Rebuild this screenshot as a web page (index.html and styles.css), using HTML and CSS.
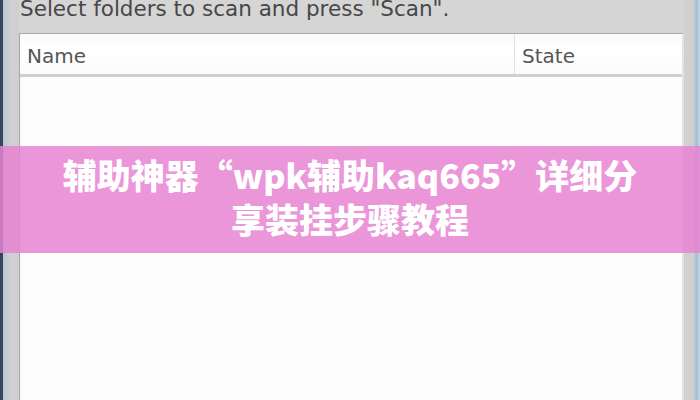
FILE: index.html
```html
<!DOCTYPE html>
<html>
<head>
<meta charset="utf-8">
<link rel="stylesheet" href="styles.css">
</head>
<body>
<div class="window">
  <div class="edge-left"></div>
  <div class="dialog">
    <div class="prompt">Select folders to scan and press "Scan".</div>
    <div class="list">
      <div class="list-header">
        <div class="col col-name">Name</div>
        <div class="col col-state">State</div>
      </div>
      <div class="list-body"></div>
    </div>
  </div>
  <div class="edge-right"></div>
</div>
<div class="banner">
  <div class="banner-text">
    <div class="banner-line">辅助神器“wpk辅助kaq665”详细分</div>
    <div class="banner-line">享装挂步骤教程</div>
  </div>
</div>
</body>
</html>
```
FILE: styles.css
```css
html, body {
  margin: 0;
  padding: 0;
  width: 700px;
  height: 400px;
  overflow: hidden;
  background: #d5d5d5;
}
.window {
  display: flex;
  width: 700px;
  height: 400px;
}
.edge-left {
  width: 19px;
  flex: none;
  background: linear-gradient(to right, #34465c 0, #34465c 3px, #b9c5d1 3px, #c6ccd3 7px, #d1d1d1 12px, #cfcfcf 19px);
}
.edge-right {
  width: 16px;
  flex: none;
  background: linear-gradient(to right, #d2d2d2 0, #cfcfcf 10px, #b0c4d8 11px, #a6bdd4 13px, #c9d9e8 16px);
}
.dialog {
  flex: 1;
  display: flex;
  flex-direction: column;
  min-width: 0;
}
.prompt {
  margin-top: -3px;
  height: 36px;
  padding-left: 1px;
  font-family: "DejaVu Sans", sans-serif;
  font-size: 21.5px;
  line-height: 24px;
  color: #474747;
  white-space: nowrap;
}
.list {
  flex: 1;
  display: flex;
  flex-direction: column;
  border-top: 1px solid #a9a9a9;
  border-left: 1px solid #a8a8a8;
  border-right: 2px solid #e2e2e2;
  background: #fdfdfd;
}
.list-header {
  display: flex;
  height: 40px;
  background: linear-gradient(to bottom, #fafafa, #ffffff 40%, #fbfbfb);
  border-bottom: 3px solid #d0d0d0;
  font-family: "DejaVu Sans", sans-serif;
  font-size: 20px;
  color: #555555;
}
.col {
  display: flex;
  align-items: center;
  box-sizing: border-box;
  padding-top: 3px;
}
.col-name {
  width: 495px;
  padding-left: 7px;
  border-right: 1px solid #e0e0e0;
}
.col-state {
  flex: 1;
  padding-left: 7px;
}
.list-body {
  flex: 1;
  background: linear-gradient(to right, #f2f9ff 0, #fdfdfd 4px);
}
.banner {
  position: absolute;
  left: 0;
  top: 146px;
  width: 700px;
  height: 107px;
  background: rgba(230, 132, 209, 0.85);
  display: flex;
  align-items: center;
  justify-content: center;
}
.banner-text {
  display: flex;
  flex-direction: column;
  align-items: center;
  padding-bottom: 5px;
}
.banner-line {
  font-family: "Noto Sans CJK SC", sans-serif;
  font-weight: 900;
  font-size: 34px;
  line-height: 44px;
  height: 44px;
  color: #ffffff;
  white-space: nowrap;
}
```
